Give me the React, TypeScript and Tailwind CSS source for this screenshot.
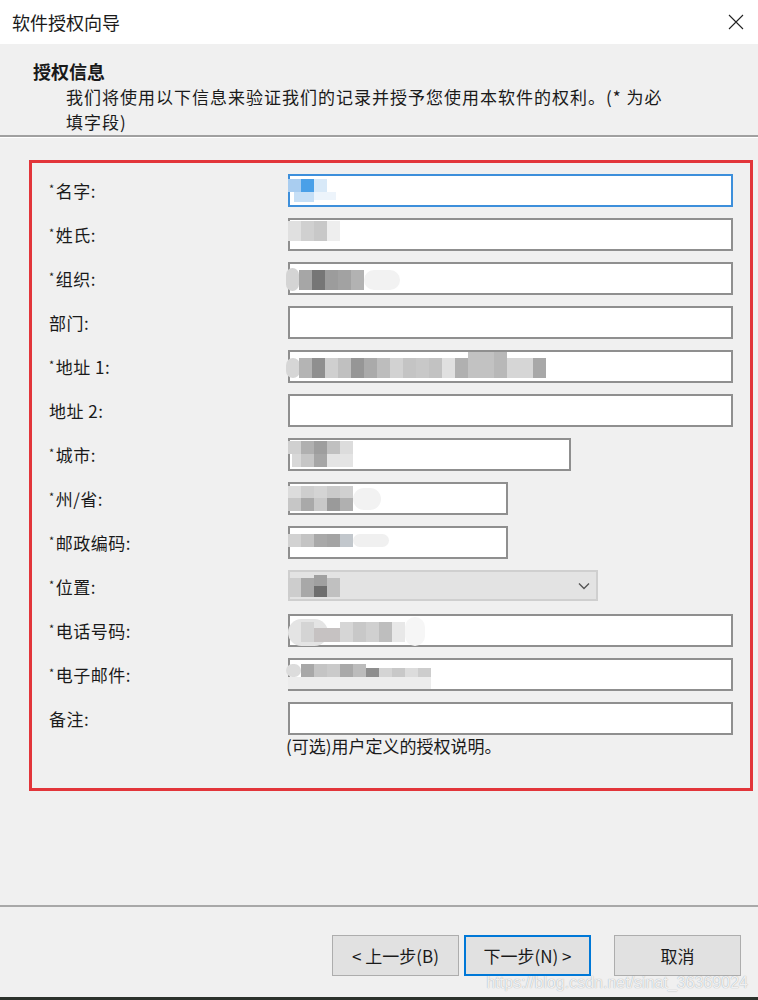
import React from "react";

type Block = { x: number; y: number; w: number; h: number; c: string; r?: boolean };

// pixelated blur over filled values
const blurs: Record<string, Block[]> = {
  name: [
    { x: -2, y: 3, w: 13, h: 13, c: "#a9cdf0" },
    { x: 11, y: 3, w: 13, h: 13, c: "#4aa0e8" },
    { x: 24, y: 3, w: 13, h: 13, c: "#d8e9f8" },
    { x: 4, y: 16, w: 20, h: 10, c: "#c6dff6" },
    { x: 24, y: 16, w: 22, h: 8, c: "#edf4fb" },
  ],
  last: [
    { x: -2, y: 1, w: 13, h: 20, c: "#e0e0e0" },
    { x: 11, y: 1, w: 13, h: 20, c: "#d0d0d0" },
    { x: 24, y: 1, w: 13, h: 20, c: "#c8c8c8" },
    { x: 37, y: 1, w: 13, h: 20, c: "#eeeeee" },
  ],
  org: [
    { x: -4, y: 4, w: 13, h: 23, c: "#d4d4d4", r: true },
    { x: 9, y: 6, w: 13, h: 20, c: "#a6a6a6" },
    { x: 22, y: 6, w: 13, h: 20, c: "#767676" },
    { x: 35, y: 6, w: 13, h: 20, c: "#9c9c9c" },
    { x: 48, y: 6, w: 13, h: 20, c: "#a2a2a2" },
    { x: 61, y: 6, w: 13, h: 20, c: "#b2b2b2" },
    { x: 74, y: 6, w: 36, h: 20, c: "#f2f2f2", r: true },
  ],
  addr: [
    { x: -4, y: 6, w: 14, h: 20, c: "#d6d6d6", r: true },
    { x: 9, y: 6, w: 13, h: 20, c: "#b4b4b4" },
    { x: 22, y: 6, w: 13, h: 20, c: "#8f8f8f" },
    { x: 35, y: 6, w: 13, h: 20, c: "#cfcfcf" },
    { x: 48, y: 6, w: 13, h: 20, c: "#c0c0c0" },
    { x: 61, y: 6, w: 13, h: 20, c: "#969696" },
    { x: 74, y: 6, w: 13, h: 20, c: "#aaaaaa" },
    { x: 87, y: 6, w: 13, h: 20, c: "#bdbdbd" },
    { x: 100, y: 6, w: 13, h: 20, c: "#d2d2d2" },
    { x: 113, y: 6, w: 13, h: 20, c: "#c4c4c4" },
    { x: 126, y: 6, w: 13, h: 20, c: "#c8c8c8" },
    { x: 139, y: 6, w: 13, h: 20, c: "#c2c2c2" },
    { x: 152, y: 6, w: 13, h: 20, c: "#e0e0e0" },
    { x: 165, y: 6, w: 13, h: 20, c: "#b0b0b0" },
    { x: 178, y: 0, w: 26, h: 26, c: "#c2c2c2" },
    { x: 204, y: 0, w: 13, h: 26, c: "#b8b8b8" },
    { x: 217, y: 6, w: 26, h: 20, c: "#d6d6d6" },
    { x: 243, y: 6, w: 13, h: 20, c: "#a8a8a8" },
  ],
  city: [
    { x: -2, y: 1, w: 13, h: 13, c: "#d0d0d0" },
    { x: 11, y: 1, w: 13, h: 13, c: "#b0b0b0" },
    { x: 24, y: 1, w: 13, h: 13, c: "#9e9e9e" },
    { x: 37, y: 1, w: 13, h: 13, c: "#c0c0c0" },
    { x: 50, y: 1, w: 13, h: 13, c: "#dcdcdc" },
    { x: 2, y: 14, w: 9, h: 13, c: "#d8d8d8" },
    { x: 11, y: 14, w: 13, h: 13, c: "#c6c6c6" },
    { x: 24, y: 14, w: 13, h: 13, c: "#a6a6a6" },
    { x: 37, y: 14, w: 26, h: 13, c: "#e4e4e4" },
  ],
  state: [
    { x: -2, y: 2, w: 13, h: 12, c: "#dcdcdc" },
    { x: 11, y: 2, w: 13, h: 12, c: "#cecece" },
    { x: 24, y: 2, w: 13, h: 12, c: "#d4d4d4" },
    { x: 37, y: 2, w: 13, h: 12, c: "#cacaca" },
    { x: 50, y: 2, w: 13, h: 12, c: "#d0d0d0" },
    { x: -2, y: 14, w: 13, h: 13, c: "#c6c6c6" },
    { x: 11, y: 14, w: 13, h: 13, c: "#a9a9a9" },
    { x: 24, y: 14, w: 13, h: 13, c: "#c8c8c8" },
    { x: 37, y: 14, w: 13, h: 13, c: "#9a9a9a" },
    { x: 50, y: 14, w: 13, h: 13, c: "#b0b0b0" },
    { x: 63, y: 4, w: 28, h: 22, c: "#f2f2f2", r: true },
  ],
  zip: [
    { x: -2, y: 6, w: 13, h: 13, c: "#d2d2d2" },
    { x: 11, y: 6, w: 13, h: 13, c: "#c4c4c4" },
    { x: 24, y: 6, w: 13, h: 13, c: "#a9a9a9" },
    { x: 37, y: 6, w: 13, h: 13, c: "#a4a4a4" },
    { x: 50, y: 6, w: 13, h: 13, c: "#c2c7cc" },
    { x: 63, y: 6, w: 36, h: 13, c: "#f0f0f0", r: true },
  ],
  loc: [
    { x: -2, y: 6, w: 13, h: 19, c: "#cdcdcd" },
    { x: 11, y: 6, w: 13, h: 19, c: "#a8a8a8" },
    { x: 24, y: 3, w: 13, h: 11, c: "#a0a0a0" },
    { x: 24, y: 14, w: 13, h: 11, c: "#6e6e6e" },
    { x: 37, y: 6, w: 13, h: 19, c: "#c0c0c0" },
  ],
  phone: [
    { x: -2, y: 3, w: 40, h: 27, c: "#e4e4e4", r: true },
    { x: 11, y: 6, w: 13, h: 20, c: "#d4d4d4" },
    { x: 24, y: 12, w: 26, h: 14, c: "#c6c2c2" },
    { x: 50, y: 6, w: 13, h: 20, c: "#d6d6d6" },
    { x: 63, y: 6, w: 13, h: 20, c: "#c8c8c8" },
    { x: 76, y: 6, w: 13, h: 20, c: "#d0d0d0" },
    { x: 89, y: 6, w: 13, h: 20, c: "#bebebe" },
    { x: 102, y: 6, w: 13, h: 20, c: "#e8e8e8" },
    { x: 115, y: 1, w: 20, h: 29, c: "#f6f6f6", r: true },
  ],
  mail: [
    { x: -4, y: 4, w: 15, h: 13, c: "#dcdcdc", r: true },
    { x: 11, y: 4, w: 13, h: 13, c: "#a8a8a8" },
    { x: 24, y: 4, w: 13, h: 13, c: "#c4c4c4" },
    { x: 37, y: 4, w: 13, h: 13, c: "#cacaca" },
    { x: 50, y: 4, w: 13, h: 13, c: "#a9a9a9" },
    { x: 63, y: 4, w: 13, h: 13, c: "#bcbcbc" },
    { x: 76, y: 8, w: 13, h: 9, c: "#8e8e8e" },
    { x: 89, y: 8, w: 13, h: 9, c: "#d4d4d4" },
    { x: 102, y: 8, w: 13, h: 9, c: "#c8c8c8" },
    { x: 115, y: 8, w: 13, h: 9, c: "#dcdcdc" },
    { x: 128, y: 8, w: 13, h: 9, c: "#cdcdcd" },
    { x: -2, y: 17, w: 143, h: 12, c: "#ececec" },
  ],
};

function Blur({ id }: { id: string }) {
  return (
    <>
      {blurs[id].map((b, i) => (
        <span
          key={i}
          className={`absolute ${b.r ? "rounded-full" : ""}`}
          style={{ left: b.x, top: b.y, width: b.w, height: b.h, background: b.c }}
        />
      ))}
    </>
  );
}

const rows = [
  { label: "名字:", req: true, w: "w-[445px]", blur: "name", focus: true },
  { label: "姓氏:", req: true, w: "w-[445px]", blur: "last" },
  { label: "组织:", req: true, w: "w-[445px]", blur: "org" },
  { label: "部门:", w: "w-[445px]" },
  { label: "地址 1:", req: true, w: "w-[445px]", blur: "addr" },
  { label: "地址 2:", w: "w-[445px]" },
  { label: "城市:", req: true, w: "w-[283px]", blur: "city" },
  { label: "州/省:", req: true, w: "w-[220px]", blur: "state" },
  { label: "邮政编码:", req: true, w: "w-[220px]", blur: "zip" },
  { label: "位置:", req: true, w: "w-[310px]", blur: "loc", select: true },
  { label: "电话号码:", req: true, w: "w-[445px]", blur: "phone" },
  { label: "电子邮件:", req: true, w: "w-[445px]", blur: "mail" },
  { label: "备注:", w: "w-[445px]" },
];

export default function App() {
  return (
    <div className="w-[758px] h-[1000px] bg-[#f0f0f0] flex flex-col text-[#1a1a1a] font-['Noto_Sans_CJK_SC','Noto_Sans',sans-serif] overflow-hidden">
      {/* title bar */}
      <div className="h-[44px] bg-white flex items-center justify-between pl-[12px] pr-[14px] shrink-0">
        <span className="text-[18px] leading-none">软件授权向导</span>
        <svg width="16" height="16" viewBox="0 0 16 16" className="text-[#222]">
          <path d="M1 1 L15 15 M15 1 L1 15" stroke="currentColor" strokeWidth="1.1" fill="none" />
        </svg>
      </div>

      {/* header */}
      <div className="h-[91px] shrink-0 pl-[33px] pt-[14px]">
        <div className="text-[18px] leading-[26px] font-bold">授权信息</div>
        <div className="pl-[33px] text-[17px] leading-[25px] tracking-[1px]">
          我们将使用以下信息来验证我们的记录并授予您使用本软件的权利。(* 为必
          <br />
          填字段)
        </div>
      </div>
      <div className="h-[2px] bg-[#a0a0a0] shrink-0" />
      <div className="h-px bg-white shrink-0" />

      {/* form */}
      <div className="mt-[22px] ml-[29px] mr-[5px] border-[3px] border-[#e2353a] pt-[11px] pl-[17px] pr-[17px] pb-[32px] shrink-0">
        {rows.map((r) => (
          <div key={r.label} className="flex h-[44px]">
            <div className="w-[239px] h-[33px] flex items-center text-[17px] tracking-[0.5px]">
              {r.req && <span className="text-[11px] self-start mt-[6px] mr-px">*</span>}
              {r.label}
            </div>
            {r.select ? (
              <div className={`${r.w} h-[31px] bg-[#e3e3e3] border-2 border-[#cfcfcf] relative flex items-center justify-end pr-[6px]`}>
                {r.blur && <Blur id={r.blur} />}
                <svg width="12" height="8" viewBox="0 0 12 8" className="text-[#555]">
                  <path d="M1 1.5 L6 6.5 L11 1.5" stroke="currentColor" strokeWidth="1.4" fill="none" />
                </svg>
              </div>
            ) : (
              <div
                className={`${r.w} h-[33px] bg-white border-2 relative ${
                  r.focus ? "border-[#3d8fdb]" : "border-[#8f8f8f]"
                }`}
              >
                {r.blur && <Blur id={r.blur} />}
              </div>
            )}
          </div>
        ))}
        <div className="ml-[237px] -mt-[10px] text-[17px] leading-[20px]">(可选)用户定义的授权说明。</div>
      </div>

      <div className="flex-1" />

      {/* footer */}
      <div className="h-[92px] shrink-0 border-t-2 border-[#a8a8a8] relative flex items-start justify-end pt-[28px] pr-[17px]">
        <button className="w-[127px] h-[41px] bg-[#e1e1e1] border border-[#adadad] text-[17px] flex items-center justify-center">
          &lt; 上一步(B)
        </button>
        <button className="ml-[5px] w-[127px] h-[41px] bg-[#e1e1e1] border-2 border-[#0078d7] text-[17px] flex items-center justify-center">
          下一步(N) &gt;
        </button>
        <button className="ml-[23px] w-[127px] h-[41px] bg-[#e1e1e1] border border-[#adadad] text-[17px] flex items-center justify-center">
          取消
        </button>
        <span className="absolute right-[10px] top-[67px] text-[16px] leading-[17px] text-white/85 font-['Liberation_Sans',sans-serif] [text-shadow:0_0_1px_#8a9096]">
          https://blog.csdn.net/sinat_36369024
        </span>
      </div>
      <div className="h-[3px] bg-[#2c322c] shrink-0" />
    </div>
  );
}
